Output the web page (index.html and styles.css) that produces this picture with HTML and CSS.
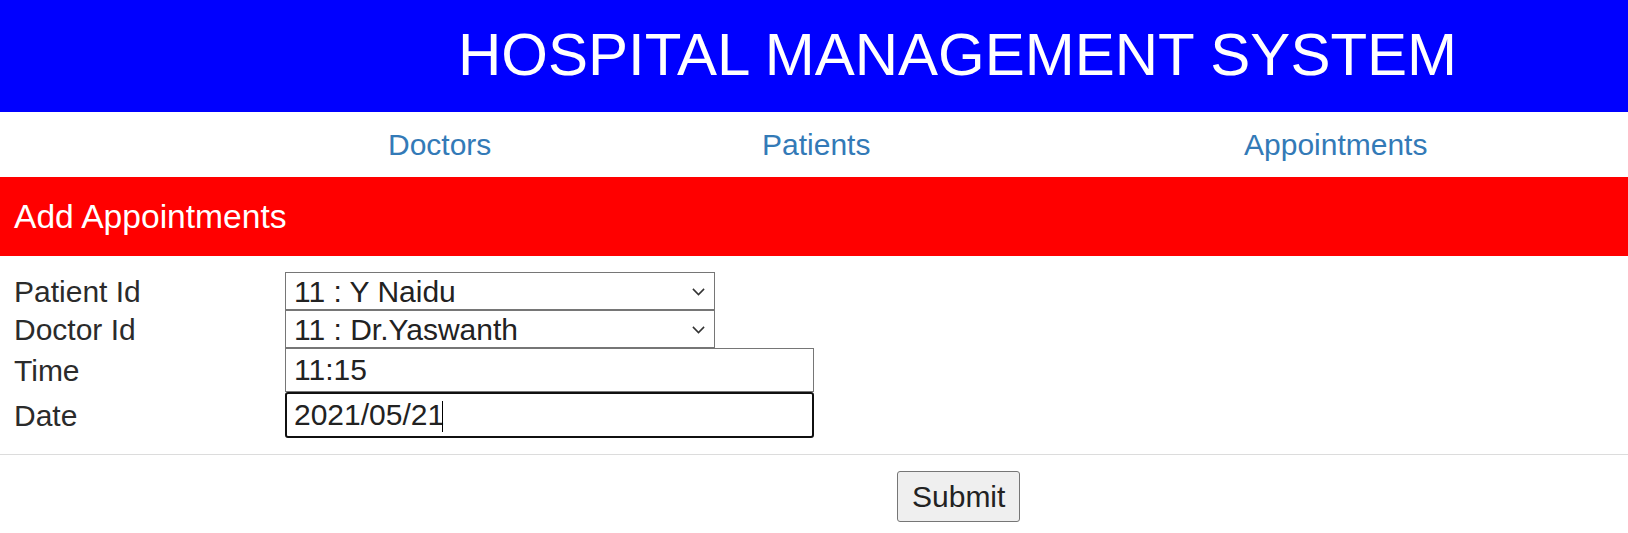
FILE: index.html
```html
<!DOCTYPE html>
<html lang="en">
<head>
<meta charset="utf-8">
<title>Hospital Management System</title>
<link rel="stylesheet" href="styles.css">
</head>
<body>
<header class="banner">
  <h1 class="banner-title">HOSPITAL MANAGEMENT SYSTEM</h1>
</header>
<nav class="nav">
  <a class="nav-link" href="#">Doctors</a>
  <a class="nav-link" href="#">Patients</a>
  <a class="nav-link" href="#">Appointments</a>
</nav>
<section class="panel-heading">
  <h2 class="panel-title">Add Appointments</h2>
</section>
<form class="form">
  <div class="form-grid">
    <label class="form-label">Patient Id</label>
    <div class="select-wrap">
      <select class="form-select"><option>11 : Y Naidu</option></select>
      <svg class="chevron" width="13" height="8" viewBox="0 0 13 8"><path d="M0.9 0.9 L6.5 6.6 L12.1 0.9" fill="none" stroke="#333" stroke-width="1.5"/></svg>
    </div>
    <label class="form-label">Doctor Id</label>
    <div class="select-wrap">
      <select class="form-select"><option>11 : Dr.Yaswanth</option></select>
      <svg class="chevron" width="13" height="8" viewBox="0 0 13 8"><path d="M0.9 0.9 L6.5 6.6 L12.1 0.9" fill="none" stroke="#333" stroke-width="1.5"/></svg>
    </div>
    <label class="form-label">Time</label>
    <div class="input-wrap">
      <input class="form-input" type="text" value="11:15">
    </div>
    <label class="form-label">Date</label>
    <div class="input-wrap">
      <input class="form-input is-focused" type="text" value="2021/05/21">
      <span class="caret"></span>
    </div>
  </div>
  <hr class="divider">
  <div class="actions">
    <button class="btn" type="button">Submit</button>
  </div>
</form>
</body>
</html>
```
FILE: styles.css
```css
* { box-sizing: border-box; }
html, body { margin: 0; padding: 0; background: #fff; }
body {
  font-family: "Liberation Sans", Arial, Helvetica, sans-serif;
  color: #333;
}

.banner {
  background: #0000ff;
  height: 112px;
  padding: 20px 0 0 458px;
}
.banner-title {
  margin: 0;
  font-weight: normal;
  font-size: 60px;
  line-height: 69px;
  color: #fff;
  white-space: nowrap;
}

.nav {
  display: grid;
  grid-template-columns: 374px 482px auto;
  justify-items: start;
  height: 65px;
  padding: 15px 0 0 388px;
}
.nav-link {
  font-size: 30px;
  line-height: 35px;
  color: #337ab7;
  text-decoration: none;
}

.panel-heading {
  background: #ff0000;
  height: 79px;
  padding: 21px 0 0 14px;
}
.panel-title {
  margin: 0;
  font-weight: normal;
  font-size: 33.6px;
  line-height: 38px;
  color: #fff;
}

.form { margin: 0; }
.form-grid {
  display: grid;
  grid-template-columns: 271px auto;
  justify-items: start;
  align-items: center;
  padding: 16px 0 0 14px;
}
.form-label {
  font-size: 30px;
  line-height: 35px;
  color: #2b2b2b;
}
.select-wrap, .input-wrap { position: relative; }
.form-select {
  -webkit-appearance: none;
  appearance: none;
  display: block;
  width: 430px;
  height: 38px;
  margin: 0;
  padding: 0 0 0 8px;
  font-family: inherit;
  font-size: 30px;
  color: #222;
  background: #fff;
  border: 1px solid #767676;
  border-radius: 0;
}
.chevron {
  position: absolute;
  right: 10px;
  top: 16px;
  pointer-events: none;
}
.form-input {
  display: block;
  width: 529px;
  height: 44px;
  margin: 0;
  padding: 0 8px;
  font-family: inherit;
  font-size: 30px;
  color: #222;
  background: #fff;
  border: 1px solid #767676;
  border-radius: 0;
  outline: none;
}
.form-input.is-focused {
  height: 46px;
  padding: 0 7px;
  border: 2px solid #101010;
  border-radius: 3px;
}
.caret {
  position: absolute;
  left: 157px;
  top: 9px;
  width: 1px;
  height: 31px;
  background: #000;
}

.divider {
  margin: 16px 0 0;
  border: 0;
  border-top: 1px solid #dcdcdc;
  height: 0;
}
.actions {
  display: flex;
  padding: 16px 0 0 897px;
}
.btn {
  height: 51px;
  padding: 0 14px;
  font-family: inherit;
  font-size: 30px;
  color: #222;
  background: #efefef;
  border: 1px solid #767676;
  border-radius: 3px;
}
```
